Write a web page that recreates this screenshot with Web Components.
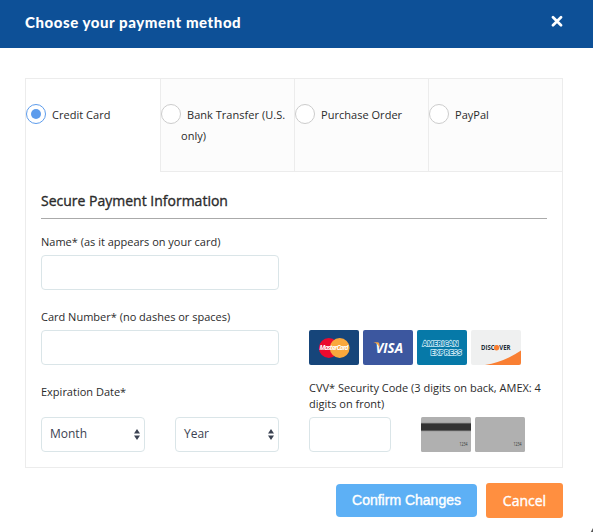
<!DOCTYPE html>
<html lang="en">
<head>
<meta charset="utf-8">
<title>Choose your payment method</title>
<style>
  body {
    background: #fff;
    color: #2b2b2b;
    font: 11px/16px "Open Sans", "Noto Sans", sans-serif;
    margin: 0;
    overflow: hidden;
  }
</style>
</head>
<body>
<payment-modal title-text="Choose your payment method">
  <payment-tabs>
    <payment-tab checked>Credit Card</payment-tab>
    <payment-tab>Bank Transfer (U.S. only)</payment-tab>
    <payment-tab>Purchase Order</payment-tab>
    <payment-tab>PayPal</payment-tab>
  </payment-tabs>
  <card-form heading="Secure Payment Information">
    <form-field label="Name* (as it appears on your card)"><text-box></text-box></form-field>
    <span></span>
    <form-field label="Card Number* (no dashes or spaces)"><text-box></text-box></form-field>
    <form-field>
      <card-logo type="mastercard"></card-logo>
      <card-logo type="visa"></card-logo>
      <card-logo type="amex"></card-logo>
      <card-logo type="discover"></card-logo>
    </form-field>
    <form-field label="Expiration Date*" wide>
      <select-box>Month</select-box>
      <select-box>Year</select-box>
    </form-field>
    <form-field label="CVV* Security Code (3 digits on back, AMEX: 4 digits on front)">
      <text-box short></text-box>
      <card-logo type="back"></card-logo>
      <card-logo type="front"></card-logo>
    </form-field>
  </card-form>
  <modal-button slot="actions" kind="confirm">Confirm Changes</modal-button>
  <modal-button slot="actions" kind="cancel">Cancel</modal-button>
</payment-modal>

<script>
class PaymentModal extends HTMLElement {
  constructor() {
    super();
    this.attachShadow({ mode: 'open' });
  }

  connectedCallback() {
    this.shadowRoot.innerHTML = `
      <style>
        :host {
          box-sizing: border-box;
          display: flex;
          flex-direction: column;
          height: 532px;
          position: relative;
          width: 593px;
        }

        header {
          align-items: center;
          background: #0d5097;
          box-sizing: border-box;
          color: #fff;
          display: flex;
          height: 48px;
          justify-content: space-between;
          padding: 0 30px 5px 25px;
        }

        h2 {
          font: 900 15px/20px Lato, sans-serif;
          letter-spacing: .56px;
          margin: 0;
          white-space: nowrap;
        }

        #close {
          display: block;
          height: 12px;
          margin-bottom: 2px;
          width: 12px;
        }

        #main {
          border: 1px solid #ececec;
          box-sizing: border-box;
          height: 390px;
          margin: 30px 30px 0 25px;
        }

        #actions {
          align-items: center;
          display: flex;
          gap: 9px;
          justify-content: flex-end;
          padding: 15px 30px 0 0;
        }

        #grip {
          bottom: 0;
          height: 4px;
          position: absolute;
          right: 0;
          width: 3px;
        }
      </style>

      <header>
        <h2>${this.getAttribute('title-text')}</h2>
        <svg id="close" viewBox="0 0 12 12">
          <path d="M2 2.2l8 8M10 2.2l-8 8" stroke="#fff" stroke-width="2.7" stroke-linecap="round"/>
        </svg>
      </header>
      <section id="main"><slot></slot></section>
      <section id="actions"><slot name="actions"></slot></section>
      <svg id="grip" viewBox="0 0 3 4"><path d="M3 0v4H.8z" fill="#555"/></svg>
    `;
  }
}

class PaymentTabs extends HTMLElement {
  constructor() {
    super();
    this.attachShadow({ mode: 'open' });
    this.shadowRoot.innerHTML = `
      <style>
        :host {
          display: grid;
          grid-template-columns: repeat(4, 134px);
          height: 93px;
        }
      </style>
      <slot></slot>
    `;
  }
}

class PaymentTab extends HTMLElement {
  constructor() {
    super();
    this.attachShadow({ mode: 'open' });
    this.shadowRoot.innerHTML = `
      <style>
        :host {
          background: #fcfcfc;
          border-bottom: 1px solid #ececec;
          border-left: 1px solid #ececec;
          box-sizing: border-box;
          display: flex;
          padding-top: 25px;
        }

        :host([checked]) {
          background: #fff;
          border-color: transparent;
          border-left: 0;
        }

        #radio {
          align-items: center;
          background: #fff;
          border: 1px solid #ccc;
          border-radius: 50%;
          box-sizing: border-box;
          display: flex;
          flex: none;
          height: 20px;
          justify-content: center;
          width: 20px;
        }

        :host([checked]) #radio {
          border-color: #5d9cec;
        }

        :host([checked]) #radio::after {
          background: #5d9cec;
          border-radius: 50%;
          content: '';
          height: 10px;
          width: 10px;
        }

        #label {
          letter-spacing: .03px;
          line-height: 21px;
          text-indent: 6px;
        }
      </style>
      <span id="radio"></span>
      <span id="label"><slot></slot></span>
    `;
  }
}

class CardForm extends HTMLElement {
  constructor() {
    super();
    this.attachShadow({ mode: 'open' });
  }

  connectedCallback() {
    this.shadowRoot.innerHTML = `
      <style>
        :host {
          display: block;
          padding: 0 15px;
        }

        h3 {
          -webkit-text-stroke: .35px #2b2b2b;
          border-bottom: 1px solid #aaa;
          box-sizing: border-box;
          font-size: 14px;
          font-weight: 400;
          height: 47px;
          line-height: 20px;
          margin: 0 0 11px;
          padding-top: 19px;
        }

        #grid {
          display: grid;
          grid-template-columns: 238px 238px;
          grid-template-rows: 60px 60px 72px;
          column-gap: 30px;
          row-gap: 15px;
        }
      </style>
      <h3>${this.getAttribute('heading')}</h3>
      <div id="grid"><slot></slot></div>
    `;
  }
}

class FormField extends HTMLElement {
  constructor() {
    super();
    this.attachShadow({ mode: 'open' });
  }

  connectedCallback() {
    this.shadowRoot.innerHTML = `
      <style>
        :host {
          display: flex;
          flex-direction: column;
          justify-content: space-between;
        }

        label {
          padding-top: 4px;
        }

        :host(:last-child) label {
          padding-top: 0;
        }

        #controls {
          display: flex;
          gap: 4px;
          margin-top: auto;
        }

        :host([wide]) #controls {
          gap: 30px;
        }
      </style>
      <label>${this.getAttribute('label') || ''}</label>
      <div id="controls"><slot></slot></div>
    `;
  }
}

class TextBox extends HTMLElement {
  constructor() {
    super();
    this.attachShadow({ mode: 'open' });
    this.shadowRoot.innerHTML = `
      <style>
        :host {
          background: #fff;
          border: 1px solid #dae5e8;
          border-radius: 4px;
          box-sizing: border-box;
          display: block;
          height: 35px;
          width: 238px;
        }

        :host([short]) {
          margin-right: 26px;
          width: 82px;
        }
      </style>
    `;
  }
}

class SelectBox extends HTMLElement {
  constructor() {
    super();
    this.attachShadow({ mode: 'open' });
    this.shadowRoot.innerHTML = `
      <style>
        :host {
          align-items: center;
          border: 1px solid #dae5e8;
          border-radius: 4px;
          box-sizing: border-box;
          color: #3b4252;
          display: flex;
          font-size: 12px;
          height: 35px;
          justify-content: space-between;
          padding: 0 4px 2px 8px;
          width: 104px;
        }

        svg {
          height: 11px;
          margin-top: 2px;
          width: 6px;
        }
      </style>
      <span><slot></slot></span>
      <svg viewBox="0 0 6 11"><path d="M0 4.6L3 0l3 4.6zM0 6.4h6L3 11z" fill="#3b4252"/></svg>
    `;
  }
}

const LOGOS = {
  mastercard: `
    <rect width="50" height="35" rx="2" fill="#16457a"/>
    <circle cx="19.8" cy="18" r="9.9" fill="#eb0a2e"/>
    <circle cx="30.7" cy="18" r="9.9" fill="#faa83c"/>
    <text x="10.5" y="20.2" font-size="6.6" font-weight="700" font-style="italic" fill="#fff" textLength="29">MasterCard</text>`,
  visa: `
    <rect width="50" height="35" rx="2" fill="#3c579f"/>
    <text x="12.5" y="22.7" font-size="14.4" font-weight="700" font-style="italic" fill="#fff" textLength="27.5" lengthAdjust="spacingAndGlyphs">VISA</text>
    <path d="M10.4 12.2h4.4q1 0 1.2 1l1 4.6q-2.2-4.2-6.6-5.6z" fill="#f3a443"/>`,
  amex: `
    <rect width="50" height="35" rx="2" fill="#0679a8"/>
    <g font-size="7.6" font-weight="700" fill="#0679a8" stroke="#c9e8f4" stroke-width="1.5" paint-order="stroke">
      <text x="5.5" y="16.2" textLength="36" lengthAdjust="spacingAndGlyphs">AMERICAN</text>
      <text x="13.5" y="25.1" textLength="31" lengthAdjust="spacingAndGlyphs">EXPRESS</text>
    </g>`,
  discover: `
    <rect width="50" height="35" rx="2" fill="#eff0f0"/>
    <path d="M14 35Q34 31.5 50 20.5V33a2 2 0 0 1-2 2z" fill="#f97f33"/>
    <text x="10" y="20.1" font-size="6.5" font-weight="700" fill="#222b35" textLength="29.5" lengthAdjust="spacingAndGlyphs">DISC<tspan fill="#f97f33">O</tspan>VER</text>
    <circle cx="25.5" cy="17.8" r="2.6" fill="#f97f33"/>`,
  back: `
    <rect width="50" height="35" rx="1.5" fill="#b0b0b0"/>
    <path d="M0 5.8h50v8.4H0z" fill="#858585"/>
    <path d="M0 6.5h50v7H0z" fill="#333"/>
    <text x="38.5" y="29" font-size="4.6" fill="#333" textLength="8" lengthAdjust="spacingAndGlyphs">1234</text>`,
  front: `
    <rect width="50" height="35" rx="1.5" fill="#b0b0b0"/>
    <text x="38.5" y="29" font-size="4.6" fill="#333" textLength="8" lengthAdjust="spacingAndGlyphs">1234</text>`
};

class CardLogo extends HTMLElement {
  constructor() {
    super();
    this.attachShadow({ mode: 'open' });
  }

  connectedCallback() {
    this.shadowRoot.innerHTML = `
      <style>
        :host {
          display: block;
          height: 35px;
          width: 50px;
        }

        svg {
          display: block;
          font-family: "Open Sans", sans-serif;
        }
      </style>
      <svg width="50" height="35" viewBox="0 0 50 35">${LOGOS[this.getAttribute('type')]}</svg>
    `;
  }
}

class ModalButton extends HTMLElement {
  constructor() {
    super();
    this.attachShadow({ mode: 'open' });
    this.shadowRoot.innerHTML = `
      <style>
        :host {
          -webkit-text-stroke: .4px #fff;
          align-items: center;
          border-radius: 4px;
          box-sizing: border-box;
          color: #fff;
          display: flex;
          justify-content: center;
        }

        :host([kind="confirm"]) {
          background: #5db0f5;
          font: 14px/20px "Liberation Sans", sans-serif;
          height: 33px;
          padding-bottom: 1px;
          width: 141px;
        }

        :host([kind="cancel"]) {
          background: #ff8f40;
          border-radius: 3px;
          font-size: 14px;
          height: 35px;
          width: 77px;
        }
      </style>
      <slot></slot>
    `;
  }
}

customElements.define('card-logo', CardLogo);
customElements.define('text-box', TextBox);
customElements.define('select-box', SelectBox);
customElements.define('form-field', FormField);
customElements.define('card-form', CardForm);
customElements.define('payment-tab', PaymentTab);
customElements.define('payment-tabs', PaymentTabs);
customElements.define('modal-button', ModalButton);
customElements.define('payment-modal', PaymentModal);
</script>
</body>
</html>
